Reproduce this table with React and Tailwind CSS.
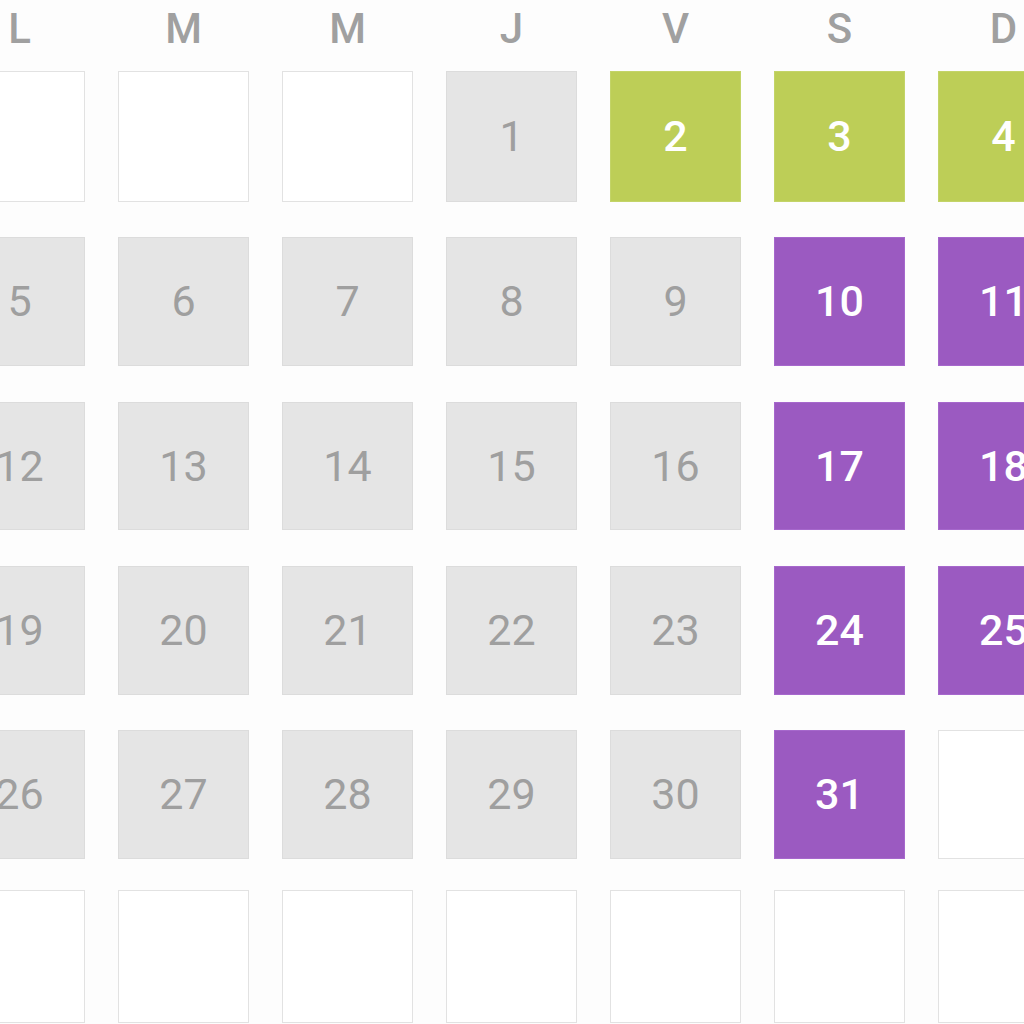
import React from "react";

const days = ["L", "M", "M", "J", "V", "S", "D"];

const rows = [
  { cls: "mt-0 h-[131px]", cells: [["", "e"], ["", "e"], ["", "e"], ["1", "g"], ["2", "l"], ["3", "l"], ["4", "l"]] },
  { cls: "mt-[35px] h-[129px]", cells: [["5", "g"], ["6", "g"], ["7", "g"], ["8", "g"], ["9", "g"], ["10", "p"], ["11", "p"]] },
  { cls: "mt-[36px] h-[128px]", cells: [["12", "g"], ["13", "g"], ["14", "g"], ["15", "g"], ["16", "g"], ["17", "p"], ["18", "p"]] },
  { cls: "mt-[36px] h-[129px]", cells: [["19", "g"], ["20", "g"], ["21", "g"], ["22", "g"], ["23", "g"], ["24", "p"], ["25", "p"]] },
  { cls: "mt-[35px] h-[129px]", cells: [["26", "g"], ["27", "g"], ["28", "g"], ["29", "g"], ["30", "g"], ["31", "p"], ["", "e"]] },
  { cls: "mt-[31px] h-[133px]", cells: [["", "e"], ["", "e"], ["", "e"], ["", "e"], ["", "e"], ["", "e"], ["", "e"]] },
];

const styles = {
  e: "bg-white border border-[#e2e2e2]",
  g: "bg-[#e5e5e5] border border-[#dcdcdc] text-[#9f9f9f] font-normal",
  l: "bg-[#bdce57] border border-[#c3d468] text-white font-medium",
  p: "bg-[#9b5ac1] border border-[#a668cc] text-white font-medium",
};

export default function App() {
  return (
    <div
      className="w-[1024px] h-[1024px] overflow-hidden bg-[#fdfdfd]"
      style={{ fontFamily: "Roboto, 'Noto Sans', sans-serif" }}
    >
      <div className="ml-[-46px] w-[1115px] flex flex-col">
        <div className="grid grid-cols-[repeat(7,131px)] gap-x-[33px] h-[71px] pt-[8px]">
          {days.map((d, i) => (
            <div key={i} className="text-center text-[42px] leading-[42px] font-medium text-[#a0a0a0]">
              {d}
            </div>
          ))}
        </div>
        {rows.map((r, ri) => (
          <div key={ri} className={`grid grid-cols-[repeat(7,131px)] gap-x-[33px] shrink-0 ${r.cls}`}>
            {r.cells.map(([n, t], ci) => (
              <div
                key={ci}
                className={`flex items-center justify-center text-[43px] leading-none ${styles[t]}`}
              >
                {n}
              </div>
            ))}
          </div>
        ))}
      </div>
    </div>
  );
}
